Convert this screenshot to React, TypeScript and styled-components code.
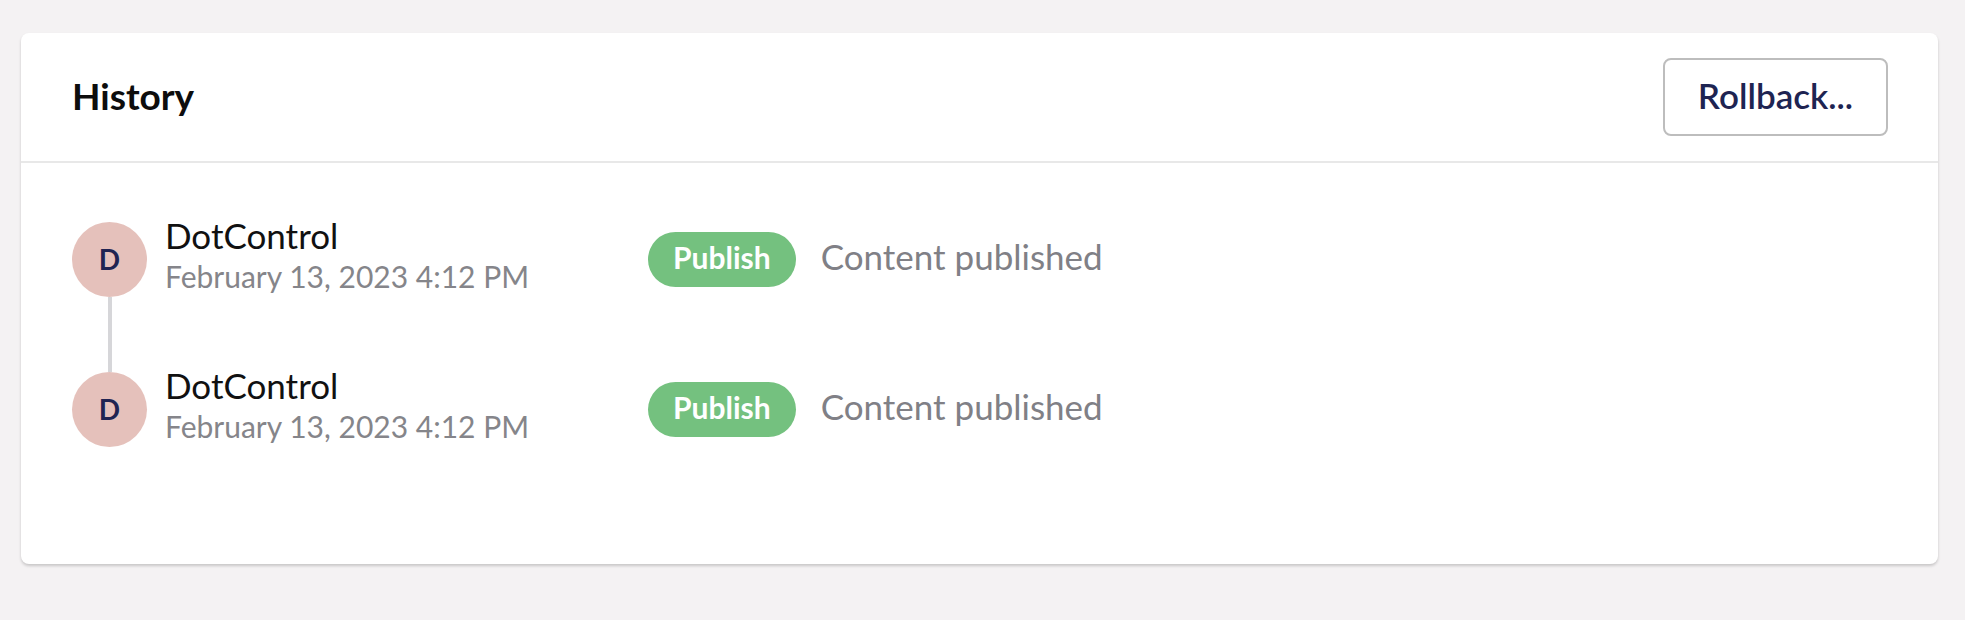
import React from "react";
import styled, { createGlobalStyle } from "styled-components";

const GlobalStyle = createGlobalStyle`
  html, body {
    margin: 0;
    padding: 0;
    background: #f4f2f3;
    font-family: Lato, "Open Sans", sans-serif;
  }
  * { box-sizing: border-box; }
`;

const Page = styled.div`
  padding: 33px 27px 40px 21px;
`;

const Card = styled.section`
  background: #ffffff;
  border-radius: 8px;
  box-shadow: 0 2px 3px rgba(0, 0, 0, 0.18);
`;

const Header = styled.header`
  height: 130px;
  display: flex;
  align-items: center;
  justify-content: space-between;
  padding: 0 50px 0 51px;
  border-bottom: 2px solid #e8e8e8;
`;

const Title = styled.h2`
  margin: 0;
  padding-bottom: 4px;
  font-size: 37px;
  line-height: 45px;
  font-weight: 700;
  color: #0d0d0d;
`;

const OutlineButton = styled.button`
  width: 225px;
  height: 78px;
  border: 2px solid #bdbdbd;
  border-radius: 8px;
  background: #ffffff;
  font-family: Lato, sans-serif;
  font-size: 35px;
  font-weight: 600;
  line-height: 41px;
  color: #1e2452;
  padding: 0 0 4px;
  cursor: pointer;
`;

const Body = styled.div`
  padding: 59px 50px 117px 51px;
  display: flex;
  flex-direction: column;
`;

const Entry = styled.div`
  display: flex;
  align-items: flex-start;
`;

const Rail = styled.div`
  width: 75px;
  display: flex;
  flex-direction: column;
  align-items: center;
`;

const Avatar = styled.div`
  width: 75px;
  height: 75px;
  border-radius: 50%;
  background: #e5c1bb;
  color: #1f2452;
  display: flex;
  align-items: center;
  justify-content: center;
  font-size: 28px;
  font-weight: 700;
  padding-bottom: 2px;
`;

const Connector = styled.div`
  width: 4px;
  height: 75px;
  background: #d6d6d9;
`;

const EntryContent = styled.div`
  height: 75px;
  margin-left: 18px;
  display: flex;
  align-items: center;
`;

const Info = styled.div`
  width: 483px;
  display: flex;
  flex-direction: column;
  padding-bottom: 10px;
`;

const UserName = styled.div`
  font-size: 35px;
  line-height: 40px;
  color: #111111;
`;

const Timestamp = styled.div`
  margin-top: 3px;
  font-size: 30px;
  line-height: 36px;
  color: #85858a;
`;

const Badge = styled.span`
  height: 55px;
  padding: 0 25px 5px;
  border-radius: 28px;
  background: #74c17f;
  color: #ffffff;
  font-size: 30px;
  font-weight: 700;
  line-height: 50px;
`;

const Description = styled.span`
  margin-left: 25px;
  padding-bottom: 7px;
  font-size: 35px;
  line-height: 41px;
  color: #808086;
`;

const entries = [
  { user: "DotControl", date: "February 13, 2023 4:12 PM", action: "Publish", text: "Content published" },
  { user: "DotControl", date: "February 13, 2023 4:12 PM", action: "Publish", text: "Content published" },
];

export default function App() {
  return (
    <>
      <GlobalStyle />
      <Page>
        <Card>
          <Header>
            <Title>History</Title>
            <OutlineButton>Rollback...</OutlineButton>
          </Header>
          <Body>
            {entries.map((e, i) => (
              <Entry key={i}>
                <Rail>
                  <Avatar>{e.user.charAt(0)}</Avatar>
                  {i < entries.length - 1 && <Connector />}
                </Rail>
                <EntryContent>
                  <Info>
                    <UserName>{e.user}</UserName>
                    <Timestamp>{e.date}</Timestamp>
                  </Info>
                  <Badge>{e.action}</Badge>
                  <Description>{e.text}</Description>
                </EntryContent>
              </Entry>
            ))}
          </Body>
        </Card>
      </Page>
    </>
  );
}
